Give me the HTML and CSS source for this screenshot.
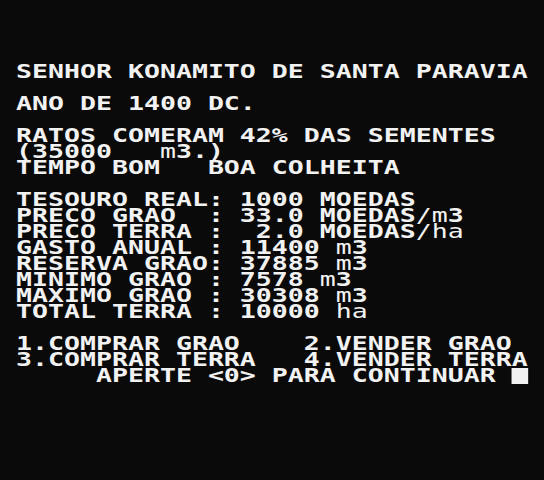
FILE: index.html
```html
<!DOCTYPE html>
<html lang="pt">
<head>
<meta charset="utf-8">
<title>Santa Paravia</title>
<link rel="stylesheet" href="styles.css">
</head>
<body>
<div class="screen">
  <div class="text">
    <div class="line"></div>
    <div class="line">SENHOR KONAMITO DE SANTA PARAVIA</div>
    <div class="line"></div>
    <div class="line">ANO DE 1400 DC.</div>
    <div class="line"></div>
    <div class="line">RATOS COMERAM 42% DAS SEMENTES</div>
    <div class="line">(35000   <span class="thin">m</span>3.)</div>
    <div class="line">TEMPO BOM   BOA COLHEITA</div>
    <div class="line"></div>
    <div class="line">TESOURO REAL: 1000 MOEDAS</div>
    <div class="line">PRECO GRAO  : 33.0 MOEDAS<span class="thin">/m</span>3</div>
    <div class="line">PRECO TERRA :  2.0 MOEDAS<span class="thin">/ha</span></div>
    <div class="line">GASTO ANUAL : 11400 <span class="thin">m</span>3</div>
    <div class="line">RESERVA GRAO: 37885 <span class="thin">m</span>3</div>
    <div class="line">MINIMO GRAO : 7578 <span class="thin">m</span>3</div>
    <div class="line">MAXIMO GRAO : 30308 <span class="thin">m</span>3</div>
    <div class="line">TOTAL TERRA : 10000 <span class="thin">ha</span></div>
    <div class="line"></div>
    <div class="line">1.COMPRAR GRAO    2.VENDER GRAO</div>
    <div class="line">3.COMPRAR TERRA   4.VENDER TERRA</div>
    <div class="line">     APERTE &lt;0&gt; PARA CONTINUAR <span class="cursor"></span></div>
  </div>
</div>
</body>
</html>
```
FILE: styles.css
```css
html, body {
  margin: 0;
  padding: 0;
  background: #0a0a0a;
}

.screen {
  width: 544px;
  height: 480px;
  padding: 48px 16px;
  box-sizing: border-box;
  overflow: hidden;
  background: #0a0a0a;
}

.text {
  width: 370px;
  transform: scaleX(1.3842);
  transform-origin: 0 0;
  font-family: "DejaVu Sans Mono", monospace;
  font-weight: bold;
  font-size: 19.2px;
  line-height: 16px;
  color: #f2f2f2;
}

.line {
  height: 16px;
  white-space: pre;
}

.thin {
  font-weight: normal;
}

.cursor {
  display: inline-block;
  width: 11.56px;
  height: 16px;
  background: #f2f2f2;
  vertical-align: top;
}
```
